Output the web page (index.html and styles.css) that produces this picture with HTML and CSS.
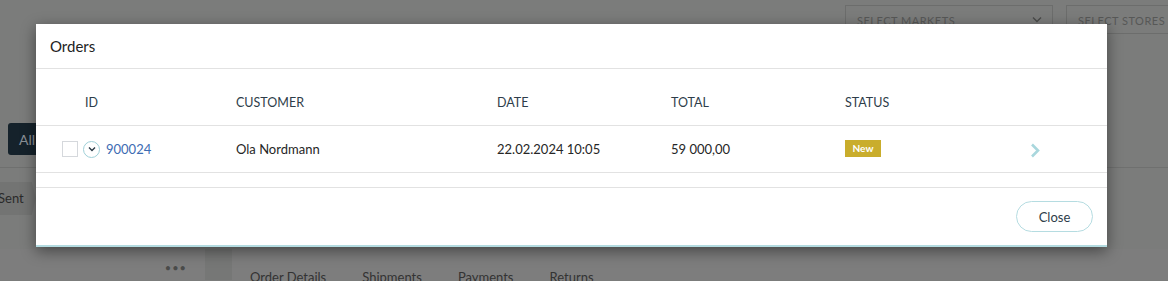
FILE: index.html
```html
<!DOCTYPE html>
<html lang="en">
<head>
    <meta charset="UTF-8">
    <meta name="viewport" content="width=device-width, initial-scale=1.0">
    <title>Orders</title>
    <link rel="stylesheet" href="styles.css">
</head>
<body>

    <div class="page">
        <div class="topbar">
            <div class="select wide">SELECT MARKETS
                <svg width="10" height="7" viewBox="0 0 10 7"><path d="M1 1.5 L5 5.5 L9 1.5" fill="none" stroke="#4a4b4a" stroke-width="1.3"/></svg>
            </div>
            <div class="select">SELECT STORES</div>
        </div>

        <div class="filters">
            <button class="btn-dark">All</button>
        </div>

        <div class="steps">
            <span class="step">Sent</span>
        </div>

        <div class="lower">
            <div class="side"><span class="dots">&bull;&bull;&bull;</span></div>
            <div class="strip"></div>
            <div class="tabs">
                <span>Order Details</span>
                <span>Shipments</span>
                <span>Payments</span>
                <span>Returns</span>
            </div>
        </div>
    </div>

    <div class="modal">
        <div class="modal-header">Orders</div>

        <div class="modal-body">
            <div class="row head">
                <div class="cell id-head">ID</div>
                <div class="cell">CUSTOMER</div>
                <div class="cell">DATE</div>
                <div class="cell">TOTAL</div>
                <div class="cell">STATUS</div>
                <div class="cell"></div>
            </div>
            <div class="row">
                <div class="cell id-cell">
                    <span class="checkbox"></span>
                    <span class="expand">
                        <svg width="8" height="6" viewBox="0 0 8 6"><path d="M1 1.5 L4 4.5 L7 1.5" fill="none" stroke="#2b3a46" stroke-width="1.4"/></svg>
                    </span>
                    <a href="#" class="order-link">900024</a>
                </div>
                <div class="cell">Ola Nordmann</div>
                <div class="cell">22.02.2024 10:05</div>
                <div class="cell">59 000,00</div>
                <div class="cell"><span class="badge">New</span></div>
                <div class="cell arrow-cell">
                    <svg width="10" height="15" viewBox="0 0 10 15"><path d="M2 1.5 L8 7.5 L2 13.5" fill="none" stroke="#a9d7dd" stroke-width="2.6"/></svg>
                </div>
            </div>
        </div>

        <div class="modal-footer">
            <button class="btn-close">Close</button>
        </div>
    </div>

</body>
</html>
```

FILE: styles.css
```css
body {
    margin: 0;
    background-color: #7b7c7b;
    font-family: Lato, "Open Sans", sans-serif;
    color: #222;
    width: 1168px;
    height: 281px;
    overflow: hidden;
    position: relative;
}

/* page behind the dialog, already dimmed */
.page {
    height: 281px;
}
.topbar {
    display: flex;
    justify-content: flex-end;
    gap: 13px;
    padding-top: 5px;
    height: 43px;
    box-sizing: border-box;
    margin-right: -30px;
}
.select {
    width: 132px;
    height: 29px;
    box-sizing: border-box;
    border: 1px solid #6c6d6c;
    color: #575857;
    font-size: 11px;
    letter-spacing: 0.5px;
    padding: 8px 10px 0 11px;
}
.select.wide {
    width: 208px;
    display: flex;
    justify-content: space-between;
}
.select svg {
    margin-top: 2px;
}
.filters {
    height: 125px;
    box-sizing: border-box;
    padding: 80px 0 0 8px;
    border-bottom: 1px solid #6f706f;
}
.btn-dark {
    background: #15222b;
    color: #8a9096;
    border: none;
    border-radius: 3px;
    height: 32px;
    width: 60px;
    font-family: inherit;
    font-size: 14px;
    text-align: left;
    padding-left: 11px;
}
.steps {
    height: 81px;
    padding-top: 14px;
    box-sizing: border-box;
}
.step {
    display: inline-block;
    background: #737473;
    color: #2a2a2a;
    font-size: 13px;
    height: 33px;
    line-height: 33px;
    width: 36px;
    text-indent: -2px;
    clip-path: polygon(0 0, 88% 0, 100% 50%, 88% 100%, 0 100%);
}
.lower {
    display: flex;
    height: 31px;
}
.side {
    width: 205px;
    background: #7d7d7d;
    display: flex;
    justify-content: flex-end;
    padding-right: 18px;
    box-sizing: border-box;
}
.dots {
    color: #4a4b4a;
    font-size: 11px;
    letter-spacing: 1px;
    margin-top: 12px;
}
.strip {
    width: 27px;
    background: #767776;
}
.tabs {
    flex: 1;
    background: #7d7d7d;
    display: flex;
    padding: 20px 0 0 18px;
    font-size: 13px;
    color: #333;
}
.tabs span {
    margin-right: 36px;
}

/* dialog */
.modal {
    position: absolute;
    left: 36px;
    top: 24px;
    width: 1071px;
    background: #fff;
    border-bottom: 2px solid #b3dbe0;
    box-shadow: 0 4px 14px rgba(0, 0, 0, 0.45);
}
.modal-header {
    height: 45px;
    box-sizing: border-box;
    padding: 13px 14px 0;
    font-size: 15px;
    color: #222;
    border-bottom: 1px solid #e2e2e2;
}
.modal-body {
    padding: 0 0 14px;
    border-bottom: 1px solid #e2e2e2;
}
.row {
    display: grid;
    grid-template-columns: 174px 261px 174px 174px 185px 1fr;
    padding-left: 26px;
    height: 47px;
    box-sizing: border-box;
    align-items: center;
    font-size: 13px;
    color: #262626;
    border-bottom: 1px solid #e2e2e2;
}
.row.head {
    height: 57px;
    padding-top: 10px;
    font-size: 12.5px;
    color: #2e3d4a;
}
.id-head {
    padding-left: 23px;
}
.id-cell {
    display: flex;
    align-items: center;
}
.checkbox {
    width: 14px;
    height: 14px;
    border: 1px solid #d5d8dc;
    margin-right: 5px;
}
.expand {
    width: 15px;
    height: 15px;
    border: 1px solid #9fd0d8;
    border-radius: 50%;
    display: flex;
    align-items: center;
    justify-content: center;
    margin-right: 6px;
}
.order-link {
    color: #3d6cb3;
    text-decoration: none;
}
.badge {
    display: inline-block;
    background: #c9ad2c;
    color: #fff;
    font-weight: bold;
    font-size: 10px;
    width: 36px;
    height: 17px;
    line-height: 16px;
    text-align: center;
    margin-bottom: 3px;
}
.arrow-cell {
    padding-top: 5px;
}
.modal-footer {
    height: 57px;
    display: flex;
    justify-content: flex-end;
    align-items: center;
    padding-right: 14px;
    box-sizing: border-box;
}
.btn-close {
    width: 77px;
    height: 31px;
    border: 1px solid #b5dce1;
    border-radius: 16px;
    background: #fff;
    font-family: inherit;
    font-size: 13px;
    color: #2e3d4a;
}
```
